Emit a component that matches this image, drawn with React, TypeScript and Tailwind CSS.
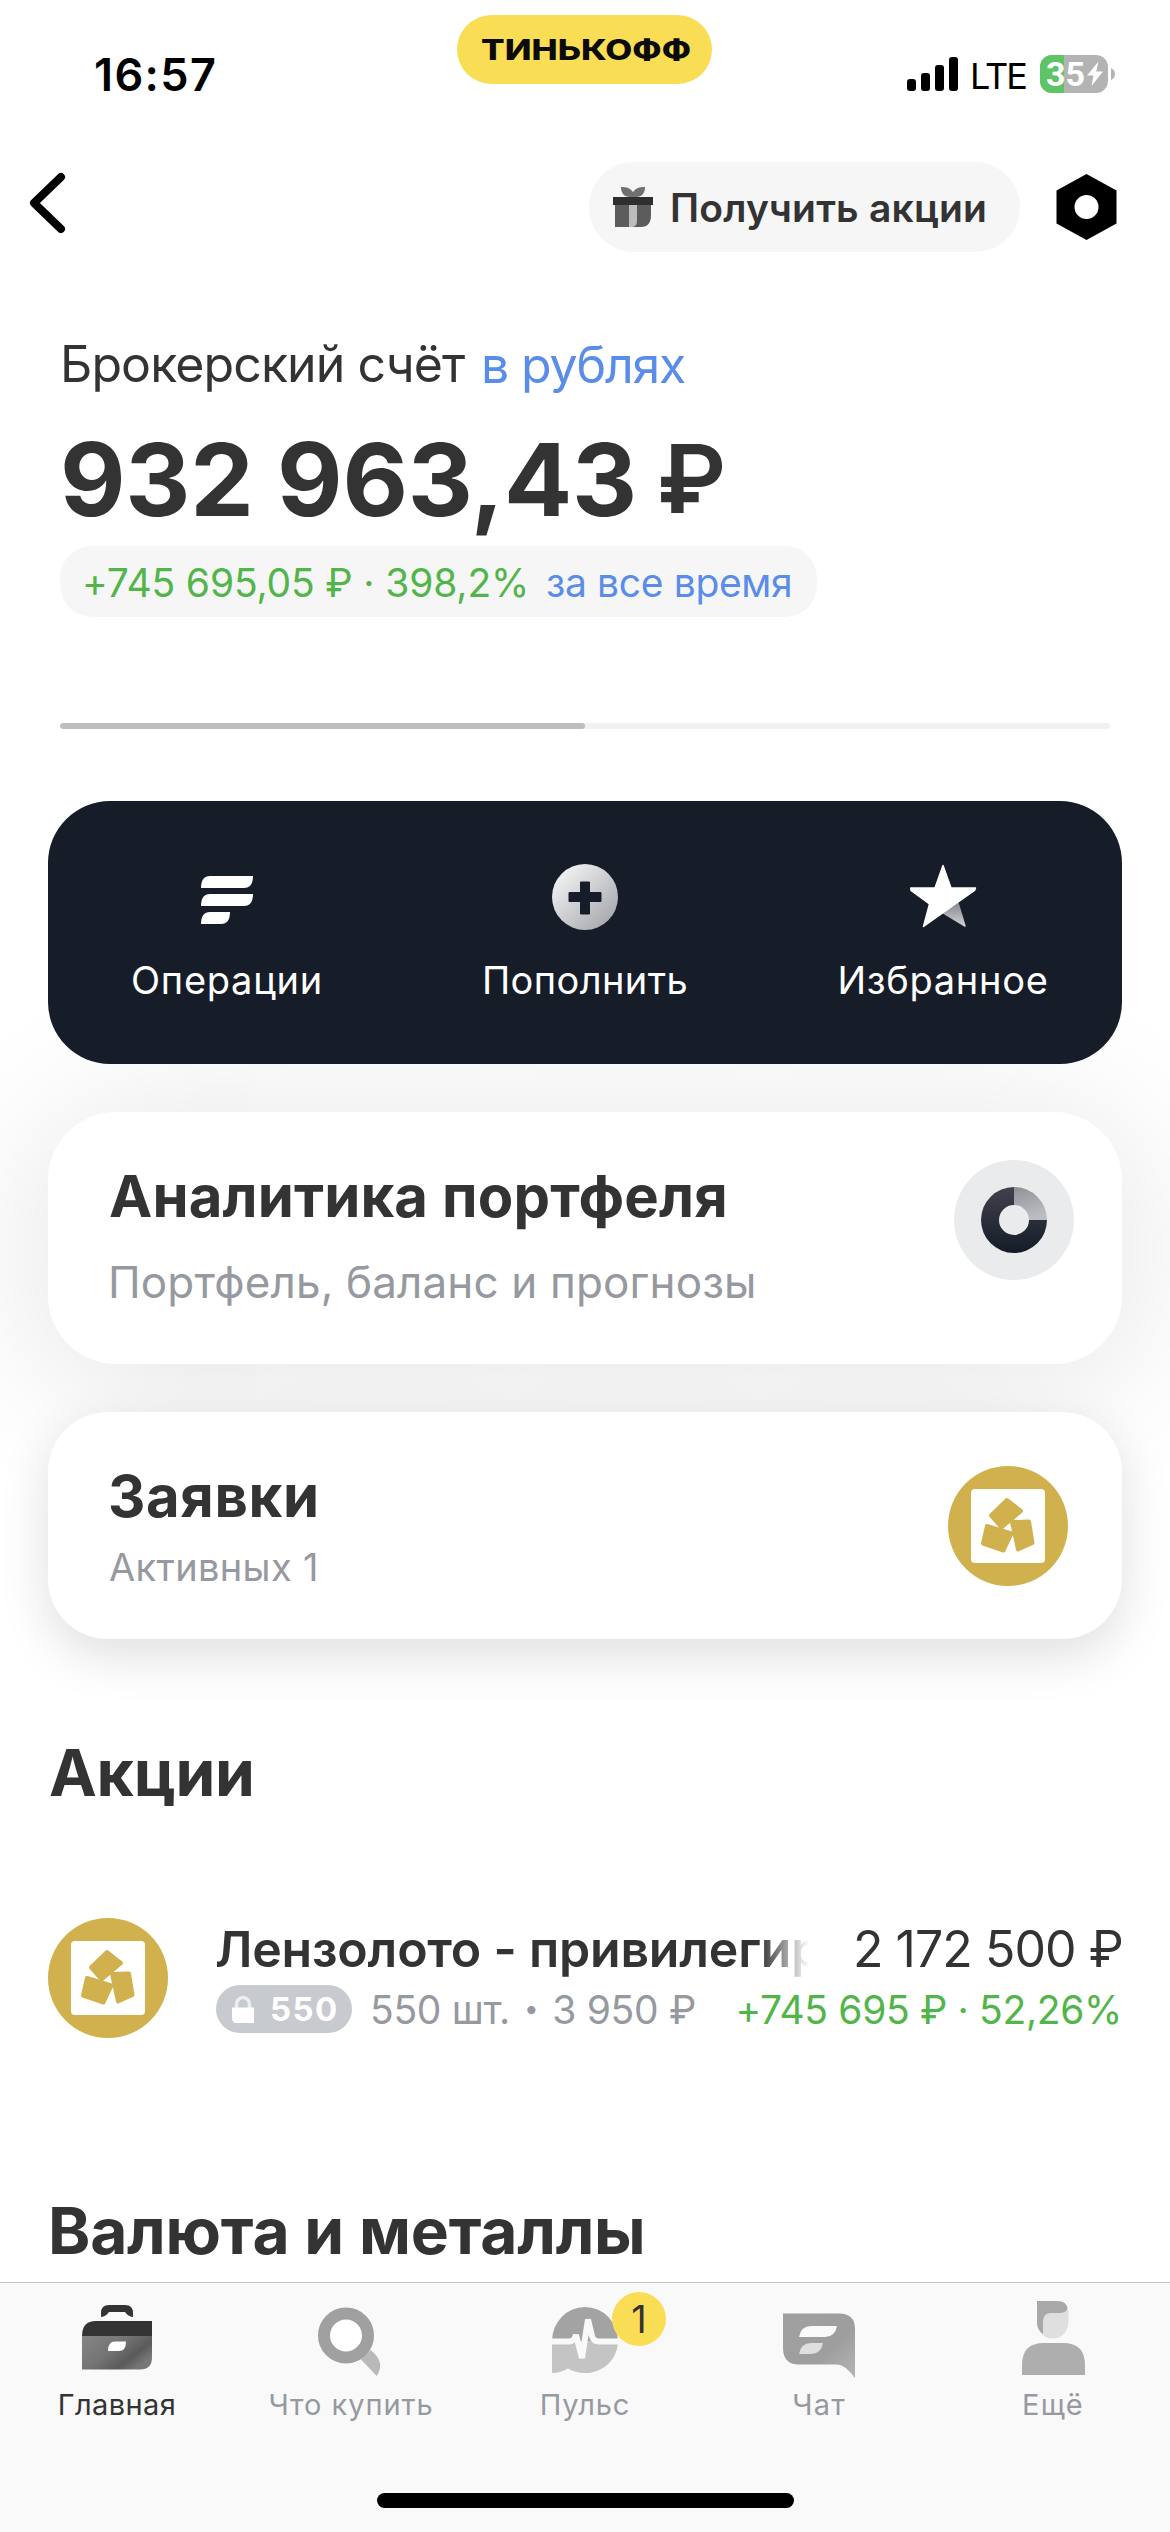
import { ReactNode } from "react";

const ACTIONS = [
  { label: "Операции", icon: <OperationsIcon />, tracking: "tracking-[0.7px]" },
  { label: "Пополнить", icon: <PlusIcon />, tracking: "tracking-[0.4px]" },
  { label: "Избранное", icon: <StarIcon />, tracking: "tracking-[0.7px]" },
];

const TABS = [
  { label: "Главная", icon: <BriefcaseIcon />, active: true, badge: 0, tracking: "tracking-[0.4px]" },
  { label: "Что купить", icon: <SearchIcon />, active: false, badge: 0, tracking: "tracking-[0.95px]" },
  { label: "Пульс", icon: <PulseIcon />, active: false, badge: 1, tracking: "tracking-[0.9px]" },
  { label: "Чат", icon: <ChatIcon />, active: false, badge: 0, tracking: "tracking-[1.2px]" },
  { label: "Ещё", icon: <PersonIcon />, active: false, badge: 0, tracking: "tracking-[1.2px]" },
];

export default function App() {
  return (
    <div className="flex h-[2532px] w-[1170px] flex-col overflow-hidden bg-white font-['Inter',sans-serif] text-[#333333]">
      <StatusBar />
      <NavBar />
      <main className="flex min-h-0 flex-1 flex-col overflow-hidden">
        <Balance />
        <Actions />
        <AnalyticsCard />
        <OrdersCard />
        <h2 className="mt-[94px] shrink-0 pl-[49px] text-[64px] leading-[80px] font-bold tracking-[-0.2px]">Акции</h2>
        <StockRow />
        <h2 className="mt-[153px] shrink-0 pl-[48px] text-[64px] leading-[80px] font-bold tracking-[-0.2px]">
          Валюта и металлы
        </h2>
      </main>
      <TabBar />
    </div>
  );
}

function StatusBar() {
  return (
    <header className="flex h-[148px] shrink-0 items-center text-black">
      <div className="w-[457px] pl-[94px] text-[45px] leading-none font-semibold tracking-[1.4px]">16:57</div>
      <div className="mt-[15px] h-[69px] w-[255px] self-start rounded-full bg-[#f9de55]">
        <svg width="255" height="69" viewBox="0 0 255 69">
          <text x="24" y="45" textLength="210" lengthAdjust="spacingAndGlyphs" fontSize="28" fontWeight="800" fill="#0b0b0b">
            ТИНЬКОФФ
          </text>
        </svg>
      </div>
      <div className="flex flex-1 items-center justify-end pr-[55px]">
        <svg width="52" height="34" viewBox="0 0 52 34">
          <rect x="0" y="22" width="9" height="12" rx="3" />
          <rect x="14" y="16" width="9" height="18" rx="3" />
          <rect x="28" y="8" width="9" height="26" rx="3" />
          <rect x="42" y="0" width="9" height="34" rx="3" />
        </svg>
        <span className="ml-[11px] w-[70px] pt-[3px] text-[36px] leading-none tracking-[-2px]">LTE</span>
        <div className="relative flex h-[38px] w-[68px] items-center overflow-hidden rounded-[12px] bg-[#b3b3b3]">
          <div className="absolute inset-y-0 left-0 w-6 bg-[#5fc466]" />
          <span className="relative ml-[6px] font-[Roboto] text-[34px] leading-none font-bold text-white">35</span>
          <svg className="relative ml-px" width="18" height="26" viewBox="0 0 18 26" fill="#fff">
            <path d="M12.500 0.500 1 14.500H7.500L5.500 25 17 10.500H10.200Z" />
          </svg>
        </div>
        <svg className="ml-[3px]" width="4" height="12" viewBox="0 0 4 12" fill="#b3b3b3">
          <path d="M0 0Q4 2 4 6T0 12Z" />
        </svg>
      </div>
    </header>
  );
}

function NavBar() {
  return (
    <nav className="flex h-[118px] shrink-0 items-center pr-[53px] pl-[28px]">
      <svg className="mb-2" width="40" height="64" viewBox="0 0 40 64" fill="none" stroke="#000" strokeWidth="8" strokeLinecap="round" strokeLinejoin="round">
        <path d="M33 6 6 32 33 58" />
      </svg>
      <button className="ml-auto flex h-[90px] w-[431px] items-center rounded-full bg-[#f6f6f6] pl-[24px]">
        <GiftIcon />
        <span className="ml-[17px] text-[39px] leading-none font-semibold tracking-[0.2px]">Получить акции</span>
      </button>
      <svg className="ml-[36px]" width="61" height="66" viewBox="0 0 61 66">
        <path fillRule="evenodd" d="M30.500 0 60.500 16.500V49.500L30.500 66 0.500 49.500V16.500ZM30.500 21A12 12 0 1 0 30.500 45 12 12 0 1 0 30.500 21Z" />
      </svg>
    </nav>
  );
}

function Balance() {
  return (
    <section className="flex shrink-0 flex-col items-start px-[60px] pt-[68px]">
      <div className="flex h-[60px] text-[50px] leading-[60px] whitespace-nowrap">
        <span className="w-[421px] tracking-[-0.9px]">Брокерский счёт</span>
        <span className="pt-px tracking-[-1.15px] text-[#5a8dea]">в рублях</span>
      </div>
      <div className="mt-[35px] flex h-[100px] text-[101px] leading-[100px] font-bold tracking-[-0.3px] whitespace-nowrap">
        <span className="w-[597px]">932 963,43</span>
        <span className="text-[95px] font-semibold">₽</span>
      </div>
      <div className="mt-[17px] flex h-[71px] w-[757px] items-center rounded-[32px] bg-[#f6f6f6] pt-px pl-[22px] text-[39px] leading-none whitespace-nowrap">
        <span className="w-[464px] tracking-[-0.15px] text-[#52b54a]">+745 695,05 ₽ · 398,2%</span>
        <span className="tracking-[-0.35px] text-[#5a8dea]">за все время</span>
      </div>
      <div className="mt-[106px] h-[6px] w-full overflow-hidden rounded-full bg-[#f1f1f1]">
        <div className="h-full w-1/2 rounded-full bg-[#bebec0]" />
      </div>
    </section>
  );
}

function Actions() {
  return (
    <section className="relative mx-[48px] mt-[72px] grid h-[263px] shrink-0 grid-cols-3 rounded-[62px] bg-[#161c28] pt-[61px]">
      {ACTIONS.map((a) => (
        <button key={a.label} className="flex flex-col items-center">
          {a.icon}
          <span className={`mt-[23px] text-[38px] leading-[50px] text-white ${a.tracking}`}>{a.label}</span>
        </button>
      ))}
    </section>
  );
}

function AnalyticsCard() {
  return (
    <section className="mx-[48px] mt-[48px] flex h-[252px] shrink-0 justify-between rounded-[68px] bg-white pt-[48px] pr-[48px] pl-[60px] shadow-[0_14px_160px_rgba(0,0,0,0.12)]">
      <div>
        <h3 className="pt-px pl-px text-[58px] leading-[70px] font-bold tracking-[0.15px]">Аналитика портфеля</h3>
        <p className="mt-[21px] text-[44px] leading-[60px] tracking-[0.13px] text-[#9699a0]">Портфель, баланс и прогнозы</p>
      </div>
      <DonutIcon />
    </section>
  );
}

function OrdersCard() {
  return (
    <section className="mx-[48px] mt-[48px] flex h-[227px] shrink-0 justify-between rounded-[60px] bg-white pt-[49px] pr-[54px] pl-[60px] shadow-[0_16px_50px_rgba(0,0,0,0.13)]">
      <div>
        <h3 className="text-[58px] leading-[70px] font-bold tracking-[0.6px]">Заявки</h3>
        <p className="mt-[6px] pl-px text-[38px] leading-[60px] tracking-[0.35px] text-[#9699a0]">Активных 1</p>
      </div>
      <GoldLogo className="mt-[5px]" />
    </section>
  );
}

function StockRow() {
  return (
    <div className="mt-[105px] flex h-[120px] shrink-0 pr-[48px] pl-[48px] whitespace-nowrap">
      <GoldLogo />
      <div className="ml-[47px] flex-1">
        <div className="flex justify-between text-[50px] leading-[62px]">
          <span className="w-[594px] overflow-hidden font-semibold tracking-[-0.2px] [mask-image:linear-gradient(to_right,#000_545px,transparent_594px)]">
            Лензолото - привилегир
          </span>
          <span className="mr-[-1px] tracking-[-0.93px]">2 172 500 ₽</span>
        </div>
        <div className="mt-[5px] flex h-[48px] items-center text-[39px] leading-none">
          <span className="ml-px flex h-full w-[136px] items-center rounded-full bg-[#c7cace] pl-[16px] text-[33px] font-bold tracking-[1.4px] text-white">
            <LockIcon />
            <span className="ml-[16px]">550</span>
          </span>
          <span className="ml-[18px] flex items-center tracking-[-0.3px] text-[#9699a0]">
            550 шт.
            <span className="mx-[14px] text-[26px]">•</span>
            3 950 ₽
          </span>
          <span className="ml-auto tracking-[-0.35px] text-[#52b54a]">+745 695 ₽ · 52,26%</span>
        </div>
      </div>
    </div>
  );
}

function TabBar() {
  return (
    <footer className="flex h-[250px] shrink-0 flex-col items-center border-t border-[#c4c4c6] bg-[#f9f9f9]">
      <div className="grid w-full grid-cols-5 pt-[17px]">
        {TABS.map((t) => (
          <Tab key={t.label} label={t.label} active={t.active} badge={t.badge} tracking={t.tracking}>
            {t.icon}
          </Tab>
        ))}
      </div>
      <div className="mt-[70px] h-[15px] w-[417px] rounded-full bg-black" />
    </footer>
  );
}

interface TabProps {
  label: string;
  active: boolean;
  badge: number;
  tracking: string;
  children: ReactNode;
}

function Tab({ label, active, badge, tracking, children }: TabProps) {
  return (
    <button className="flex flex-col items-center">
      <span className="relative">
        {children}
        {badge > 0 && (
          <span className="absolute top-[-8px] left-[67px] flex size-[54px] items-center justify-center rounded-full bg-[#f9de55] text-[38px] leading-none text-[#333333]">
            {badge}
          </span>
        )}
      </span>
      <span className={`mt-[7px] text-[29px] leading-[36px] ${tracking} ${active ? "text-[#333333]" : "text-[#9699a0]"}`}>
        {label}
      </span>
    </button>
  );
}

/* Icons */

function GiftIcon() {
  return (
    <svg width="40" height="40" viewBox="0 0 40 40">
      <path d="M8 0C14 0 17 1 20 5 23 1 26 0 32 0 32 6 29 10 23 10H17C11 10 8 6 8 0Z" fill="#707070" />
      <path d="M2 18H38V28Q38 40 28 40H2Z" fill="#5c5c5c" />
      <path d="M16 18H24V34Q24 40 18 40H16Z" fill="#bdbdbd" />
      <path d="M0 10H40V18H0Z" fill="#2f2f2f" />
    </svg>
  );
}

function OperationsIcon() {
  return (
    <svg width="70" height="70" viewBox="0 0 70 70" fill="#fff">
      <path d="M9 26C9 18 12 14 18 14H61C61 22 58 26 52 26Z" />
      <path d="M9 44C9 36 12 32 18 32H61C61 40 58 44 52 44Z" />
      <path d="M9 62C9 54 12 50 18 50H38C38 58 35 62 29 62Z" />
    </svg>
  );
}

function PlusIcon() {
  return (
    <svg width="70" height="70" viewBox="0 0 70 70">
      <defs>
        <linearGradient id="plus" x1="0" y1="0" x2="1" y2="1">
          <stop offset="0.100" stopColor="#f4f4f5" />
          <stop offset="0.900" stopColor="#a6a8ad" />
        </linearGradient>
      </defs>
      <circle cx="35" cy="35" r="33" fill="url(#plus)" />
      <path d="M30.500 20H39.500V30.500H51V39.500H39.500V52H30.500V39.500H19V30.500H30.500Z" fill="#161c28" stroke="#161c28" strokeLinejoin="round" />
    </svg>
  );
}

function StarIcon() {
  return (
    <svg width="70" height="70" viewBox="0 0 70 70" strokeLinejoin="round">
      <defs>
        <linearGradient id="star" x1="0" y1="0" x2="0" y2="1">
          <stop offset="0" stopColor="#85898f" />
          <stop offset="1" stopColor="#cfd0d3" />
        </linearGradient>
      </defs>
      <path d="M50 41 57 64 35.500 51Z" fill="url(#star)" stroke="url(#star)" strokeWidth="1.500" />
      <path d="M35 3.500 43 26H67.500L66.500 28.500 15.500 64.500 21.500 42 3 28.500 2.800 26H27Z" fill="#fff" stroke="#fff" strokeWidth="1.500" />
    </svg>
  );
}

function DonutIcon() {
  return (
    <svg width="120" height="120" viewBox="0 0 120 120">
      <defs>
        <linearGradient id="donut" x1="0" y1="0" x2="0" y2="1">
          <stop offset="0" stopColor="#41424e" />
          <stop offset="1" stopColor="#141b27" />
        </linearGradient>
        <linearGradient id="slice" x1="0" y1="0" x2="0.300" y2="1">
          <stop offset="0" stopColor="#909197" />
          <stop offset="1" stopColor="#bcbdc1" />
        </linearGradient>
      </defs>
      <circle cx="60" cy="60" r="60" fill="#e9ebec" />
      <path d="M60 27V45A15 15 0 1 0 75 60H93A33 33 0 1 1 60 27Z" fill="url(#donut)" />
      <path d="M60 27A33 33 0 0 1 93 60H75A15 15 0 0 0 60 45Z" fill="url(#slice)" />
    </svg>
  );
}

function GoldLogo({ className }: { className?: string }) {
  return (
    <svg className={className} width="120" height="120" viewBox="0 0 120 120">
      <circle cx="60" cy="60" r="60" fill="#d0b14e" />
      <rect x="23" y="23" width="74" height="74" rx="4" fill="#fff" />
      <g fill="#d0b14e" stroke="#d0b14e" strokeWidth="4" strokeLinejoin="round">
        <path d="M59 34 73 45 53.500 61.500 43 49.500Z" />
        <path d="M64 56 81 55.500 84.500 77 70 83.500Z" />
        <path d="M39 60 63.500 67.500 55.500 84.500 35 77.500Z" />
      </g>
    </svg>
  );
}

function LockIcon() {
  return (
    <svg width="22" height="28" viewBox="0 0 22 28">
      <path d="M4.500 14V9.500A6.500 7 0 0 1 17.500 9.500V14" fill="none" stroke="#eceef0" strokeWidth="3.500" />
      <path d="M0 12.500H22V28H5Q0 28 0 23Z" fill="#fff" />
    </svg>
  );
}

function BriefcaseIcon() {
  return (
    <svg width="80" height="80" viewBox="0 0 80 80">
      <defs>
        <linearGradient id="case" x1="0" y1="0" x2="1" y2="0.600">
          <stop offset="0" stopColor="#858585" />
          <stop offset="0.500" stopColor="#747474" />
          <stop offset="0.800" stopColor="#5a5a5a" />
          <stop offset="1" stopColor="#777777" />
        </linearGradient>
      </defs>
      <path d="M24 17V13Q24 5 32 5H48Q56 5 56 13V17Q51 16.500 48 12H32Q29 16.500 24 17Z" fill="#333" />
      <path d="M5 36H75V57.500Q75 69.500 63 69.500H5Z" fill="url(#case)" />
      <path d="M19 21H75V36H5Q5 21 19 21Z" fill="#333" />
      <path d="M31 51Q31 41.500 38 41.500H49Q49 51 42 51Z" fill="#fff" />
    </svg>
  );
}

function SearchIcon() {
  return (
    <svg width="80" height="80" viewBox="0 0 80 80">
      <path d="M50 59.500 59.500 50Q75 62 65.700 76Z" fill="#b9b9b9" />
      <circle cx="35" cy="35.500" r="22" fill="#fff" stroke="#a0a0a0" strokeWidth="12" />
    </svg>
  );
}

function PulseIcon() {
  return (
    <svg width="80" height="80" viewBox="0 0 80 80">
      <path d="M7 41A33 34 0 0 1 73 41Z" fill="#a3a3a3" />
      <path d="M7 41H73A33 32 0 0 1 23 68.500Q15 73 7 73Z" fill="#c4c4c4" />
      <path d="M7 41.500H24C29 41.500 30 38 31 35L37 58 43 19.500 47 36C48 40 50 41.500 54 41.500H74" fill="none" stroke="#f9f9f9" strokeWidth="6" strokeLinejoin="bevel" />
    </svg>
  );
}

function ChatIcon() {
  return (
    <svg width="80" height="80" viewBox="0 0 80 80">
      <defs>
        <linearGradient id="chat" x1="0" y1="0" x2="1" y2="1">
          <stop offset="0" stopColor="#a0a0a0" />
          <stop offset="0.600" stopColor="#9e9e9e" />
          <stop offset="1" stopColor="#b5b5b5" />
        </linearGradient>
      </defs>
      <path d="M4 13.500H60Q76 13.500 76 29V78Q66 64.500 58 64.500H20Q4 64.500 4 48Z" fill="url(#chat)" />
      <path d="M20 37Q22 26 32 26H58Q56 37 46 37Z" fill="#f9f9f9" />
      <path d="M20 54Q22 43 32 43H44Q42 54 32 54Z" fill="#dfdfdf" />
    </svg>
  );
}

function PersonIcon() {
  return (
    <svg width="80" height="80" viewBox="0 0 80 80">
      <path d="M24 10H55.500V22A15.750 16.500 0 0 1 24 22Z" fill="#dfdfdf" />
      <path d="M24 1H44Q54 1 54.500 9 53 13 46 13H38Q30 13 30 22V34Q24 30 24 22Z" fill="#a8a8a8" />
      <path d="M9 75V65Q9 43 31 43H50Q72 43 72 65V75Z" fill="#aeaeae" />
    </svg>
  );
}
